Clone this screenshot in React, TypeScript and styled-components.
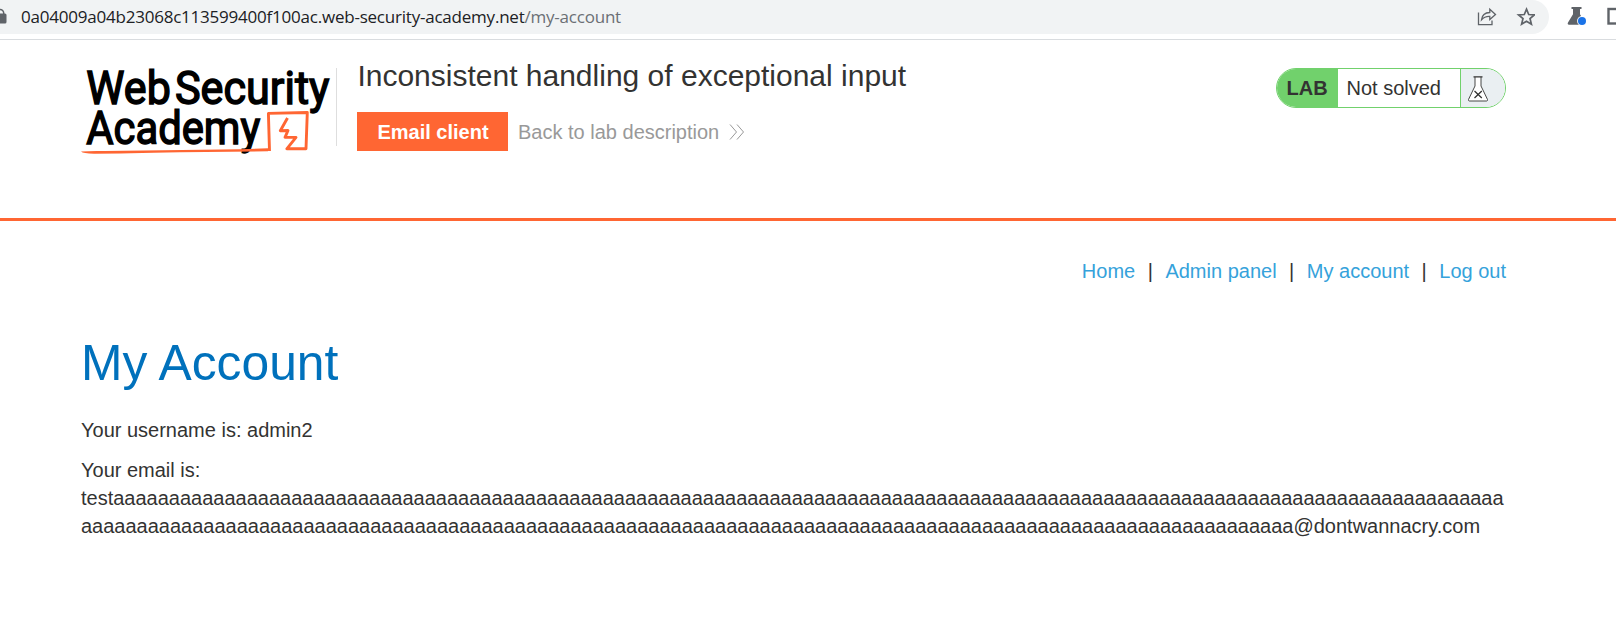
import React from "react";
import styled, { createGlobalStyle } from "styled-components";

const GlobalStyle = createGlobalStyle`
  body { margin: 0; background: #fff; color: #333332; overflow: hidden;
    font: 20px/28px "Liberation Sans", Arial, sans-serif; }
  * { box-sizing: border-box; }
`;

const Page = styled.div`
  width: 100%;
  height: 637px;
  overflow: hidden;
`;
const Toolbar = styled.div`
  display: flex;
  height: 40px;
  border-bottom: 1px solid #d9dcdf;
`;
const AddressBar = styled.div`
  display: flex;
  align-items: center;
  width: 1549px;
  height: 34px;
  flex: none;
  background: #f1f3f4;
  border-radius: 0 17px 17px 0;
  & > svg { flex: none; }
`;
const Url = styled.div`
  width: 1454px;
  margin-left: 14px;
  color: #202124;
  font: 17px/34px "Open Sans", "Noto Sans", sans-serif;
  letter-spacing: -0.22px;
  white-space: nowrap;
  span { color: #6b6f74; }
`;
const Extensions = styled.div`
  display: flex;
  flex: none;
  height: 34px;
  margin-left: 18px;
  svg { flex: none; }
`;
const Header = styled.header`
  display: flex;
  height: 181px;
  padding: 25px 110px 0 81px;
  border-bottom: 3px solid #ff6633;
`;
const LogoBox = styled.div`
  width: 256px;
  height: 92px;
  flex: none;
  svg { display: block; overflow: visible; }
`;
const TitleArea = styled.div`
  flex: 1;
  margin-left: 20px;
`;
const Title = styled.h2`
  margin: -6px 0 0 0.4px;
  font-size: 30px;
  line-height: 34px;
  font-weight: 400;
  white-space: nowrap;
`;
const Actions = styled.div`
  display: flex;
  align-items: center;
  margin-top: 19px;
  height: 39px;
`;
const EmailButton = styled.a`
  width: 151px;
  height: 39px;
  padding-left: 1px;
  background: #ff6633;
  color: #fff;
  font-weight: 700;
  line-height: 40px;
  text-align: center;
`;
const BackLink = styled.a`
  display: flex;
  align-items: center;
  gap: 10px;
  margin-left: 10px;
  color: #999;
  white-space: nowrap;
`;
const Status = styled.div`
  display: flex;
  width: 230px;
  height: 40px;
  margin-top: 3px;
  border: 1px solid #71d16c;
  border-radius: 20px;
  overflow: hidden;
  line-height: 38px;
`;
const StatusLabel = styled.b`
  width: 61px;
  padding-left: 9.5px;
  background: #71d16c;
`;
const StatusText = styled.span`
  flex: 1;
  padding-left: 8.5px;
`;
const StatusIcon = styled.span`
  width: 45px;
  border-left: 1px solid #71d16c;
  background: #eaeff2;
  svg { display: block; margin: 6px 0 0 6px; }
`;
const Main = styled.main`
  padding: 0 110px 0 81px;
`;
const Nav = styled.nav`
  display: flex;
  justify-content: flex-end;
  gap: 12.5px;
  padding-top: 36px;
  a { color: #35a2db; }
`;
const Heading = styled.h1`
  margin: 50px 0 0;
  color: #0071bc;
  font-size: 49.8px;
  line-height: 56px;
  font-weight: 400;
`;
const Info = styled.p<{ $top: number }>`
  margin: ${(p) => p.$top}px 0 0;
  overflow-wrap: break-word;
`;

const Lock = () => (
  <svg width="7" height="34" viewBox="0 0 7 34">
    <path d="M-3.500 14v-1a3.600 3.600 0 0 1 7.200 0v1" fill="none" stroke="#5f6368" strokeWidth="1.500" />
    <rect x="-7" y="13.500" width="13.500" height="10" rx="1.500" fill="#5f6368" />
  </svg>
);

const BarIcons = () => (
  <svg width="60" height="34" viewBox="1475 0 60 34" fill="none" stroke="#5f6368">
    <path d="M1478.500 12.500V24.700H1492V20.500" strokeWidth="1.300" />
    <path d="M1481.500 19.800C1482 15.400 1485 12.700 1489.800 12.500V9.200L1495.500 14.400L1489.800 19.500V16.300C1486 16.100 1483.600 17.300 1481.500 19.800Z" strokeWidth="1.300" />
    <path d="M1526.500 9.200L1528.700 14.500L1534.400 14.900L1530 18.500L1531.400 24.200L1526.500 21.200L1521.600 24.200L1523 18.500L1518.600 14.900L1524.300 14.500Z" strokeWidth="1.700" />
  </svg>
);

const ExtensionIcons = () => (
  <svg width="49" height="34" viewBox="1567 0 49 34">
    <path d="M1571.500 7h10v2h-1.500v5.200l5 8.300q1 2.200-1 2.200h-15q-2-.2-1-2.200l5-8.300V9H1571.500Z" fill="#5f6368" />
    <circle cx="1582" cy="21" r="4.900" fill="#fff" />
    <circle cx="1582" cy="21" r="4" fill="#1a73e8" />
    <rect x="1608.500" y="9" width="15" height="14.500" fill="none" stroke="#5f6368" strokeWidth="2.400" />
  </svg>
);

const Logo = () => (
  <svg width="256" height="92" viewBox="81 65 256 92">
    <g fill="#000" stroke="#000" strokeWidth="1.500" fontFamily="Roboto, sans-serif" fontWeight="400" fontSize="46.5">
      <text x="86.300" y="103.700" textLength="84.500" lengthAdjust="spacingAndGlyphs">Web</text>
      <text x="175" y="103.700" textLength="154.500" lengthAdjust="spacingAndGlyphs">Security</text>
      <text x="86.300" y="144.300" textLength="174" lengthAdjust="spacingAndGlyphs">Academy</text>
    </g>
    <path d="M81 151.500Q91 150.600 105 151L240 149.200L268 148.200V151.300L180 152.300Q125 153.600 94 153.700Q83 153.500 81 151.500Z" fill="#ff6633" />
    <path d="M269.500 151L268.400 113.400L307.300 112.500L306 148.800H286.800L296 137.400L285 137.300L288 130.500L280.300 130.800L287.500 118" fill="none" stroke="#ff6633" strokeWidth="2.900" strokeLinejoin="round" />
    <path d="M336.500 68V146" stroke="#dedede" />
  </svg>
);

const Chevrons = () => (
  <svg width="16" height="18" viewBox="0 0 16 18" fill="none" stroke="#999" strokeWidth="1">
    <path d="M1 1.500L7.500 9L1 16.500M8 1.500L14.500 9L8 16.500" />
  </svg>
);

const Flask = () => (
  <svg width="22" height="28" viewBox="0 0 22 28">
    <path d="M8 2V11L1.500 24.500Q1.300 26 2.500 26H19.500Q20.700 26 20.500 24.500L14 11V2" fill="#fff" stroke="#333332" strokeWidth=".9" />
    <path d="M6.500 1.800H15.500" stroke="#333332" strokeWidth="1.200" />
    <path d="M7.500 16L14.800 23M14.800 16L7.500 23" stroke="#333332" strokeWidth="1.300" />
  </svg>
);

const email = "test" + "a".repeat(234) + "@dontwannacry.com";
const links = ["Home", "Admin panel", "My account", "Log out"];

export default function App() {
  return (
    <Page>
      <GlobalStyle />
      <Toolbar>
        <AddressBar>
          <Lock />
          <Url>0a04009a04b23068c113599400f100ac.web-security-academy.net<span>/my-account</span></Url>
          <BarIcons />
        </AddressBar>
        <Extensions><ExtensionIcons /></Extensions>
      </Toolbar>
      <Header>
        <LogoBox><Logo /></LogoBox>
        <TitleArea>
          <Title>Inconsistent handling of exceptional input</Title>
          <Actions>
            <EmailButton>Email client</EmailButton>
            <BackLink>Back to lab description <Chevrons /></BackLink>
          </Actions>
        </TitleArea>
        <Status>
          <StatusLabel>LAB</StatusLabel>
          <StatusText>Not solved</StatusText>
          <StatusIcon><Flask /></StatusIcon>
        </Status>
      </Header>
      <Main>
        <Nav>
          {links.map((label, i) => (
            <React.Fragment key={label}>
              {i > 0 && <span>|</span>}
              <a>{label}</a>
            </React.Fragment>
          ))}
        </Nav>
        <Heading>My Account</Heading>
        <Info $top={25}>Your username is: admin2</Info>
        <Info $top={12}>Your email is: {email}</Info>
      </Main>
    </Page>
  );
}
